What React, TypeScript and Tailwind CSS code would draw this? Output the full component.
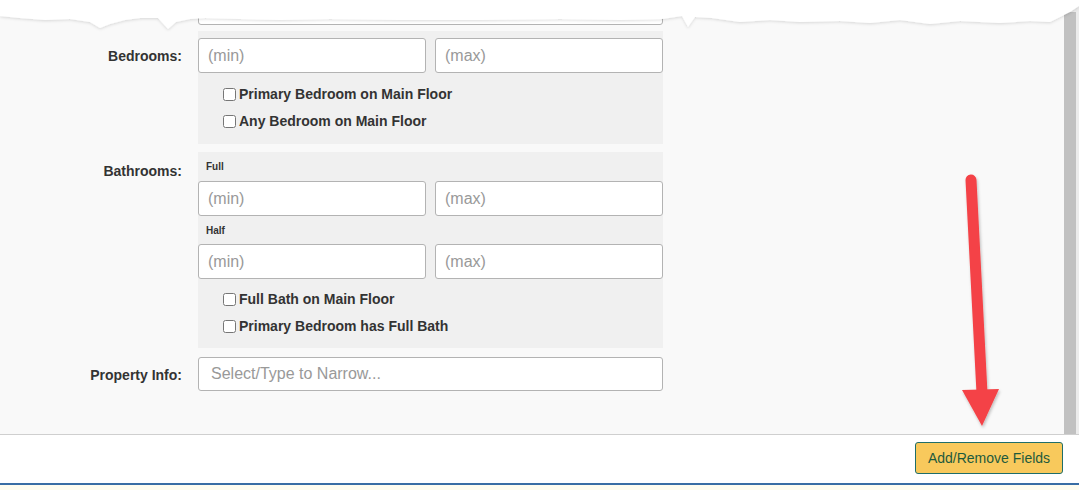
// App.tsx
import React from "react";

// ردیف چک‌باکس
const Check = ({ label }: { label: string }) => (
  <label className="flex h-[27px] items-center gap-[3px] pl-[25px] text-[14px] font-bold text-[#333]">
    <input type="checkbox" className="h-[13px] w-[13px]" />
    {label}
  </label>
);

const MinMax = () => (
  <div className="grid grid-cols-2 gap-[9px]">
    <input
      type="text"
      placeholder="(min)"
      className="h-[35px] rounded-[3px] border border-[#b3b3b3] bg-white px-[9px] text-[16px] placeholder:text-[#999]"
    />
    <input
      type="text"
      placeholder="(max)"
      className="h-[35px] rounded-[3px] border border-[#b3b3b3] bg-white px-[9px] text-[16px] placeholder:text-[#999]"
    />
  </div>
);

const Label = ({ text, pad }: { text: string; pad: string }) => (
  <div className={`w-[182px] shrink-0 text-right text-[14px] font-bold leading-[20px] text-[#333] ${pad}`}>
    {text}
  </div>
);

// لبه‌ی پاره‌شده‌ی بالای تصویر
const tornEdge =
  "0,0 1079,0 1079,6 1070,12 1062,16 1050,22 1030,21 1000,23 960,21 930,24 900,20 870,23 840,21 800,22 770,20 740,22 712,18 695,17 688,27 682,16 662,19 620,20 560,19 480,20 400,20 330,19 280,20 240,19 205,18 190,19 176,22 168,29 158,18 140,18 125,20 110,24 100,28 90,22 70,19 45,20 20,18 0,16";

export default function App() {
  return (
    <div className="relative h-[490px] w-full overflow-hidden bg-[#fffdf0] font-['Liberation_Sans',Arial,sans-serif]">
      {/* پنل فرم */}
      <div className="flex h-[435px] border-b border-[#cfcfcf] bg-[#f9f9f9]">
        <div className="-mt-[10px] flex flex-1 flex-col">
          {/* ردیف بالایی (بریده شده) */}
          <div className="flex">
            <Label text="Status:" pad="pt-[8px]" />
            <input
              type="text"
              placeholder="Select/Type to Narrow..."
              className="ml-[16px] h-[35px] w-[465px] rounded-[3px] border border-[#b3b3b3] bg-white px-[12px] text-[16px] placeholder:text-[#999]"
            />
          </div>

          {/* اتاق خواب */}
          <div className="mt-[6px] flex">
            <Label text="Bedrooms:" pad="pt-[15px]" />
            <div className="ml-[16px] w-[465px] bg-[#f0f0f0] pt-[7px] pb-[9px]">
              <MinMax />
              <div className="pt-[8px]">
                <Check label="Primary Bedroom on Main Floor" />
                <Check label="Any Bedroom on Main Floor" />
              </div>
            </div>
          </div>

          {/* حمام */}
          <div className="mt-[8px] flex">
            <Label text="Bathrooms:" pad="pt-[9px]" />
            <div className="ml-[16px] w-[465px] bg-[#f0f0f0] pt-[8px] pb-[8px]">
              <div className="h-[14px] pl-[8px] text-[10px] font-bold leading-[14px] text-[#333]">Full</div>
              <div className="mt-[7px]">
                <MinMax />
              </div>
              <div className="mt-[8px] h-[14px] pl-[8px] text-[10px] font-bold leading-[14px] text-[#333]">Half</div>
              <div className="mt-[6px]">
                <MinMax />
              </div>
              <div className="pt-[7px]">
                <Check label="Full Bath on Main Floor" />
                <Check label="Primary Bedroom has Full Bath" />
              </div>
            </div>
          </div>

          {/* اطلاعات ملک */}
          <div className="mt-[9px] flex">
            <Label text="Property Info:" pad="pt-[8px]" />
            <input
              type="text"
              placeholder="Select/Type to Narrow..."
              className="ml-[16px] h-[34px] w-[465px] rounded-[3px] border border-[#b3b3b3] bg-white px-[12px] text-[16px] placeholder:text-[#999]"
            />
          </div>
        </div>

        {/* اسکرول‌بار */}
        <div className="flex w-[15px] flex-col bg-[#ececec]">
          <div className="mt-[12px] w-[12px] flex-1 bg-[#c1c1c1]" />
        </div>
      </div>

      {/* فوتر */}
      <div className="flex h-[50px] items-start justify-end border-b-2 border-[#3a6ea5] bg-white pr-[16px] pt-[7px]">
        <button className="h-[32px] w-[148px] rounded-[3px] border border-[#1f6e6a] bg-[#f8c95c] text-[14px] text-[#1e5a3c]">
          Add/Remove Fields
        </button>
      </div>

      {/* لبه‌ی پاره */}
      <svg
        className="pointer-events-none absolute left-0 top-0 h-[34px] w-full"
        viewBox="0 0 1079 34"
        preserveAspectRatio="none"
      >
        <defs>
          <filter id="tear" x="-5%" y="-20%" width="110%" height="160%">
            <feDropShadow dx="0" dy="1" stdDeviation="1.4" floodColor="#000" floodOpacity="0.14" />
          </filter>
        </defs>
        <polygon points={tornEdge} fill="#fff" filter="url(#tear)" />
      </svg>

      {/* فلش قرمز */}
      <svg className="pointer-events-none absolute left-0 top-0 h-[490px] w-[1079px]" viewBox="0 0 1079 490">
        <defs>
          <filter id="arrowShadow" x="-50%" y="-10%" width="200%" height="120%">
            <feDropShadow dx="1" dy="2" stdDeviation="1.5" floodColor="#000" floodOpacity="0.25" />
          </filter>
        </defs>
        <g filter="url(#arrowShadow)">
          <line x1="971" y1="180" x2="982" y2="393" stroke="#f44347" strokeWidth="11" strokeLinecap="round" />
          <polygon points="962,390 999,389 982,426" fill="#f44347" />
        </g>
      </svg>
    </div>
  );
}
